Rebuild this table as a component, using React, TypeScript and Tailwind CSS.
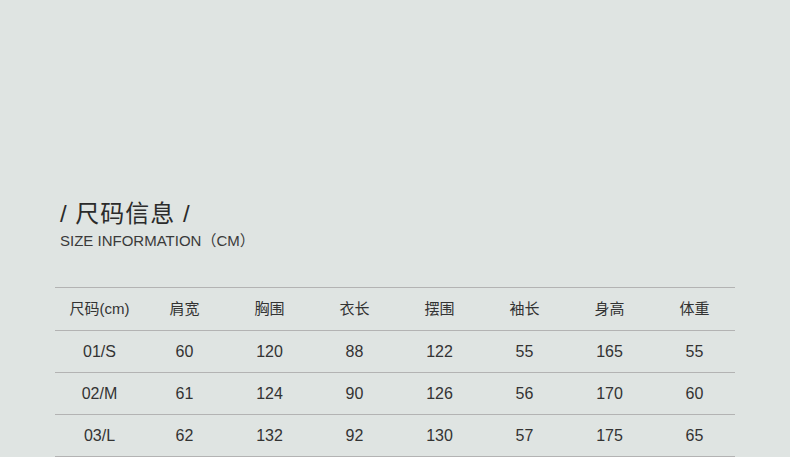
const headers = ['尺码(cm)', '肩宽', '胸围', '衣长', '摆围', '袖长', '身高', '体重']

const rows = [
  ['01/S', '60', '120', '88', '122', '55', '165', '55'],
  ['02/M', '61', '124', '90', '126', '56', '170', '60'],
  ['03/L', '62', '132', '92', '130', '57', '175', '65'],
]

export default function App() {
  return (
    <div
      className="w-[790px] h-[457px] overflow-hidden bg-[#dfe4e2] text-[#333]"
      style={{ fontFamily: '"Liberation Sans", "Noto Sans CJK SC", sans-serif' }}
    >
      <div className="pt-[199px] pl-[60px]">
        <h1 className="text-[24px] leading-[30px] tracking-[1px] text-[#2b2b2b]">/ 尺码信息 /</h1>
        <p className="mt-[2px] text-[15px] leading-[20px] text-[#3a3a3a]">SIZE INFORMATION（CM）</p>
      </div>
      <div className="mt-[36px] ml-[55px] w-[680px] border-t border-[#b3b3b3]">
        <div className="grid grid-cols-8 h-[43px] items-center border-b border-[#b3b3b3] text-[15px]">
          {headers.map((h) => (
            <div key={h} className="pl-[4px] text-center">
              {h}
            </div>
          ))}
        </div>
        {rows.map((r) => (
          <div
            key={r[0]}
            className="grid grid-cols-8 h-[42px] items-center border-b border-[#b3b3b3] text-[16px]"
          >
            {r.map((c, i) => (
              <div key={i} className="pl-[4px] text-center">
                {c}
              </div>
            ))}
          </div>
        ))}
      </div>
    </div>
  )
}
